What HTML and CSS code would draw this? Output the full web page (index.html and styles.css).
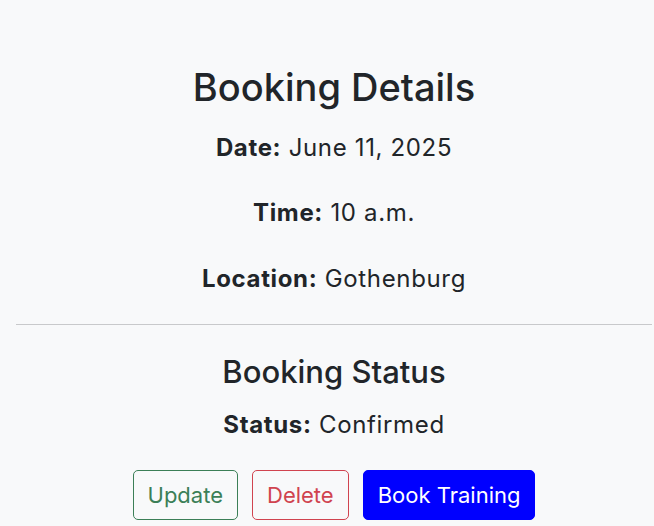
FILE: index.html
```html
<!DOCTYPE html>
<html lang="en">
<head>
<meta charset="utf-8">
<title>Booking Details</title>
<link rel="stylesheet" href="styles.css">
</head>
<body>
<main class="page">
  <section class="details">
    <h2 class="title">Booking Details</h2>
    <p class="row first"><strong>Date:</strong> June 11, 2025</p>
    <p class="row"><strong>Time:</strong> 10 a.m.</p>
    <p class="row"><strong>Location:</strong> Gothenburg</p>
  </section>
  <hr class="divider">
  <section class="status">
    <h3 class="subtitle">Booking Status</h3>
    <p class="row status-row"><strong>Status:</strong> Confirmed</p>
    <div class="actions">
      <a class="btn btn-update" href="#">Update</a>
      <a class="btn btn-delete" href="#">Delete</a>
      <a class="btn btn-book" href="#">Book Training</a>
    </div>
  </section>
</main>
</body>
</html>
```

FILE: styles.css
```css
html, body {
  margin: 0;
  padding: 0;
}
body {
  background: #f8f9fa;
  color: #212529;
  font-family: Inter, "Noto Sans", sans-serif;
}
.page {
  padding: 65px 2px 0 16px;
  text-align: center;
}
.title {
  margin: 0 0 19px;
  font-size: 38px;
  font-weight: 500;
  line-height: 1.2;
}
.row {
  margin: 0 0 29.5px;
  font-size: 24px;
  letter-spacing: 0.65px;
  line-height: 1.5;
}
.row strong {
  font-weight: 700;
}
.details .row:last-child {
  margin-bottom: 0;
}
.divider {
  margin: 27px 0 0;
  border: 0;
  border-top: 1px solid #c8c9cb;
  height: 0;
}
.subtitle {
  margin: 28px 0 17px;
  font-size: 31px;
  font-weight: 500;
  line-height: 1.2;
}
.status-row {
  margin-bottom: 27px;
}
.actions {
  display: flex;
  justify-content: center;
  gap: 14px;
}
.btn {
  display: inline-flex;
  align-items: center;
  justify-content: center;
  box-sizing: border-box;
  height: 50px;
  padding: 0 14px;
  border: 1px solid transparent;
  border-radius: 5px;
  font-size: 22px;
  text-decoration: none;
}
.btn-update {
  color: #3b7f57;
  border-color: #3b7f57;
}
.btn-delete {
  color: #d0434f;
  border-color: #d0434f;
}
.btn-book {
  color: #fff;
  background: #0000ff;
  border-color: #0000ff;
}
```
